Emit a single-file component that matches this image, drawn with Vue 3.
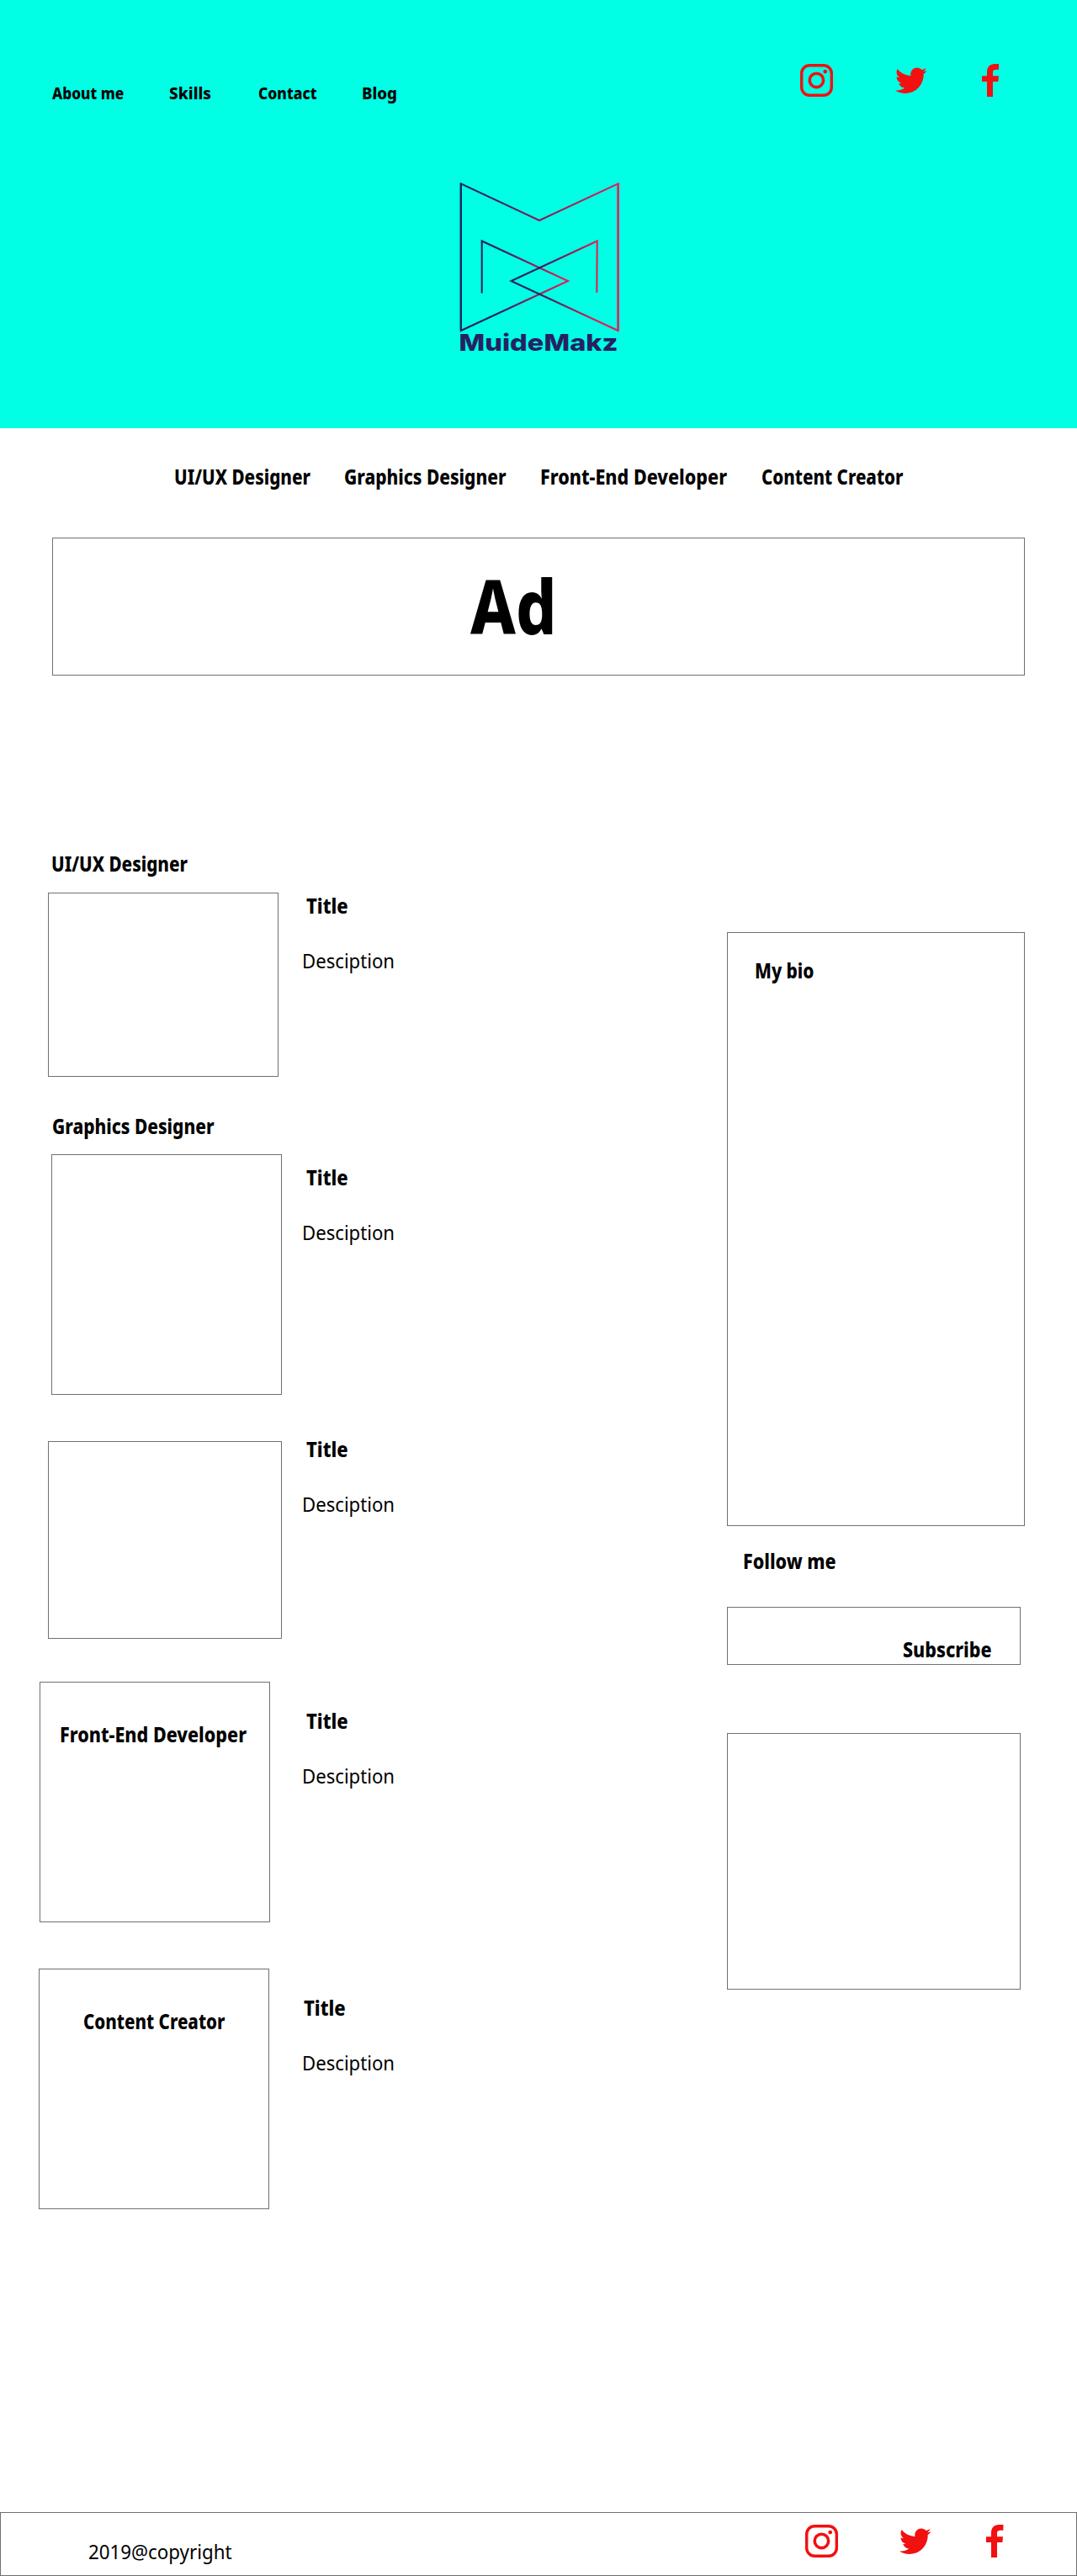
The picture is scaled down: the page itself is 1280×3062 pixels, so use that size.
<script setup>
import { h } from 'vue'

// One line of text fitted to a given width, which gives the condensed letterforms.
const Label = ({ text, w, size = 24 }) =>
  h('svg', { class: 'label', width: w, height: size, 'font-size': size }, [
    h('text', { x: 0, y: size * 0.75, textLength: w, lengthAdjust: 'spacingAndGlyphs', fill: 'currentColor' }, text)
  ])
Label.props = ['text', 'w', 'size']

const Socials = () =>
  h('div', { class: 'socials' }, [
    h('svg', { width: 39, height: 39, viewBox: '0 0 39 39' }, [
      h('rect', { x: 1.7, y: 1.7, width: 35.6, height: 35.6, rx: 9.5, fill: 'none', stroke: 'currentColor', 'stroke-width': 3.4 }),
      h('circle', { cx: 19.4, cy: 19.4, r: 8.2, fill: 'none', stroke: 'currentColor', 'stroke-width': 3.6 }),
      h('circle', { cx: 29.7, cy: 9.1, r: 2.4, fill: 'currentColor' })
    ]),
    h('svg', { width: 37.5, height: 37.5, viewBox: '0 0 512 512' }, [
      h('path', {
        fill: 'currentColor',
        d: 'M459.37 151.716c.325 4.548.325 9.097.325 13.645 0 138.72-105.583 298.558-298.558 298.558-59.452 0-114.68-17.219-161.137-47.106 8.447.974 16.568 1.299 25.34 1.299 49.055 0 94.213-16.568 130.274-44.832-46.132-.975-84.792-31.188-98.112-72.772 6.498.974 12.995 1.624 19.818 1.624 9.421 0 18.843-1.3 27.614-3.573-48.081-9.747-84.143-51.98-84.143-102.985v-1.299c13.969 7.797 30.214 12.67 47.431 13.319-28.264-18.843-46.781-51.005-46.781-87.391 0-19.492 5.197-37.36 14.294-52.954 51.655 63.675 129.3 105.258 216.365 109.807-1.624-7.797-2.599-15.918-2.599-24.04 0-57.828 46.782-104.934 104.934-104.934 30.213 0 57.502 12.67 76.67 33.137 23.715-4.548 46.456-13.32 66.599-25.34-7.798 24.366-24.366 44.833-46.132 57.827 21.117-2.273 41.584-8.122 60.426-16.243-14.292 20.791-32.161 39.308-52.628 54.253z'
      })
    ]),
    h('svg', { width: 20.5, height: 39, viewBox: '0 0 20.5 39' }, [
      h('path', {
        fill: 'currentColor',
        d: 'M6 39V21H0v-6.7h6V9.6C6 3.5 9.5 0 15.3 0h5.1v6.7h-3.5C13.8 6.7 13 8 13 10.3v4h7L19.4 21H13v18z'
      })
    ])
  ])

const nav = [
  { text: 'About me', w: 85.2 },
  { text: 'Skills', w: 50 },
  { text: 'Contact', w: 69.5 },
  { text: 'Blog', w: 42 }
]

const roles = [
  { text: 'UI/UX Designer', w: 162 },
  { text: 'Graphics Designer', w: 192.5 },
  { text: 'Front-End Developer', w: 222 },
  { text: 'Content Creator', w: 168.5 }
]

const posts = [
  { id: 'uiux', heading: roles[0] },
  { id: 'graphics', heading: roles[1] },
  { id: 'extra' },
  { id: 'frontend', inner: roles[2] },
  { id: 'content', inner: roles[3] }
]
</script>

<template>
  <div class="page">
    <header class="top">
      <div class="bar">
        <nav class="nav">
          <Label v-for="n in nav" :key="n.text" :text="n.text" :w="n.w" :size="20" />
        </nav>
        <Socials />
      </div>
      <svg class="logo" width="190" height="204" viewBox="546 216 190 204">
        <defs>
          <linearGradient id="gTop" gradientUnits="userSpaceOnUse" x1="560" y1="0" x2="735" y2="0">
            <stop offset="0" stop-color="#262262" /><stop offset="1" stop-color="#e31e58" />
          </linearGradient>
          <linearGradient id="gLeft" gradientUnits="userSpaceOnUse" x1="590" y1="0" x2="672" y2="0">
            <stop offset="0" stop-color="#262262" /><stop offset="1" stop-color="#ee1c56" />
          </linearGradient>
          <linearGradient id="gRight" gradientUnits="userSpaceOnUse" x1="640" y1="0" x2="708" y2="0">
            <stop offset="0" stop-color="#262262" /><stop offset="1" stop-color="#e31e58" />
          </linearGradient>
        </defs>
        <g fill="none" stroke-width="2.1">
          <path stroke="url(#gLeft)" d="M572.7 348.5V286.5L675 334L547.8 393V218" />
          <path stroke="url(#gRight)" d="M709.3 347.8L709.7 286.5L607.5 334L734.6 393V218" />
          <path stroke="url(#gTop)" d="M547.8 392V218.3L641 262L734.6 218.3V392" />
        </g>
        <text class="brand" x="545.5" y="416.7" textLength="189" lengthAdjust="spacingAndGlyphs">MuideMakz</text>
      </svg>
    </header>

    <div class="roles">
      <Label v-for="r in roles" :key="r.text" :text="r.text" :w="r.w" />
    </div>

    <div class="box ad"><Label text="Ad" :w="102.5" :size="90" /></div>

    <main class="main">
      <div class="posts">
        <section v-for="p in posts" :key="p.id" :class="['post', p.id]">
          <Label v-if="p.heading" class="heading" :text="p.heading.text" :w="p.heading.w" />
          <div class="row">
            <div class="box thumb"><Label v-if="p.inner" :text="p.inner.text" :w="p.inner.w" /></div>
            <div class="copy">
              <Label class="title" text="Title" :w="49.7" />
              <Label class="regular" text="Desciption" :w="110" />
            </div>
          </div>
        </section>
      </div>

      <aside class="side">
        <div class="box bio"><Label text="My bio" :w="70.5" /></div>
        <Label class="follow" text="Follow me" :w="110.5" />
        <div class="box subscribe"><Label text="Subscribe" :w="105.5" /></div>
        <div class="box widget"></div>
      </aside>
    </main>

    <footer class="box footer">
      <Label class="regular" text="2019@copyright" :w="170.5" />
      <Socials />
    </footer>
  </div>
</template>

<style>
body {
  margin: 0;
  background: #fff;
}
.label {
  display: block;
  flex: none;
  overflow: visible;
}
.socials {
  display: flex;
  align-items: center;
  color: #f21010;
}
.socials svg {
  display: block;
  flex: none;
}
.socials svg:nth-child(2) {
  margin: 0 65.5px 0 73.5px;
}
</style>

<style scoped>
.page {
  width: 1280px;
  height: 3062px;
  font-family: "Noto Sans", "Open Sans", sans-serif;
  font-weight: 800;
  color: #000;
}
.box {
  box-sizing: border-box;
  border: 1px solid #707070;
}
.top {
  height: 508.5px;
  background: #00ffe5;
}
.bar {
  display: flex;
  justify-content: space-between;
  align-items: flex-start;
  height: 47px;
  padding: 76px 93px 0 62px;
}
.nav {
  display: flex;
  padding-top: 27px;
}
.nav > :nth-child(2) { margin-left: 53.8px; }
.nav > :nth-child(3) { margin-left: 56px; }
.nav > :nth-child(4) { margin-left: 53.8px; }
.logo {
  display: block;
  margin: 93px 0 0 546px;
  overflow: visible;
}
.brand {
  font: 800 27.5px Inter, sans-serif;
  fill: #262262;
}
.roles {
  display: flex;
  gap: 40.4px;
  padding: 49.5px 0 0 207px;
}
.ad {
  width: 1156px;
  height: 164px;
  margin: 57px 0 0 62px;
  padding: 45.5px 0 0 495.5px;
}
.main {
  display: flex;
  align-items: flex-start;
  height: 1968px;
  padding-top: 215px;
}
.posts {
  width: 864px;
}
.heading {
  margin-left: 60.7px;
}
.row {
  display: flex;
}
.thumb {
  flex: none;
  width: 274px;
  height: 286px;
}
.copy {
  display: flex;
  flex-direction: column;
  gap: 41px;
}
.title {
  margin-left: 4.5px;
}
.regular {
  font-weight: 400;
}
.uiux .row { margin: 19px 0 0 57px; }
.uiux .thumb { height: 219px; }
.uiux .copy { padding: 7px 0 0 28px; }
.graphics { margin-top: 50px; }
.graphics .heading { margin-left: 61.8px; }
.graphics .row { margin: 18px 0 0 61px; }
.graphics .copy { padding: 19px 0 0 24px; }
.extra { margin-top: 55px; }
.extra .row { margin-left: 57px; }
.extra .thumb { width: 278px; height: 235px; }
.extra .copy { padding: 1px 0 0 24px; }
.frontend { margin-top: 51px; }
.frontend .row { margin-left: 47px; }
.frontend .thumb { padding: 53px 0 0 23px; }
.frontend .copy { padding: 38px 0 0 38px; }
.content { margin-top: 55px; }
.content .row { margin-left: 46px; }
.content .thumb { padding: 53px 0 0 51.8px; }
.content .copy { padding: 38px 0 0 39px; }
.content .title { margin-left: 1.5px; }
.side {
  padding-top: 90px;
}
.bio {
  width: 354px;
  height: 706px;
  padding: 36px 0 0 31.5px;
}
.follow {
  margin: 33px 0 0 19px;
}
.subscribe {
  width: 349px;
  height: 69px;
  margin-top: 39px;
  padding: 40.5px 0 0 208px;
}
.widget {
  width: 349px;
  height: 305px;
  margin-top: 81px;
}
.footer {
  display: flex;
  justify-content: space-between;
  align-items: flex-start;
  height: 76px;
  padding: 14px 86.5px 0 104px;
}
.footer > .label {
  margin-top: 23px;
}
</style>
